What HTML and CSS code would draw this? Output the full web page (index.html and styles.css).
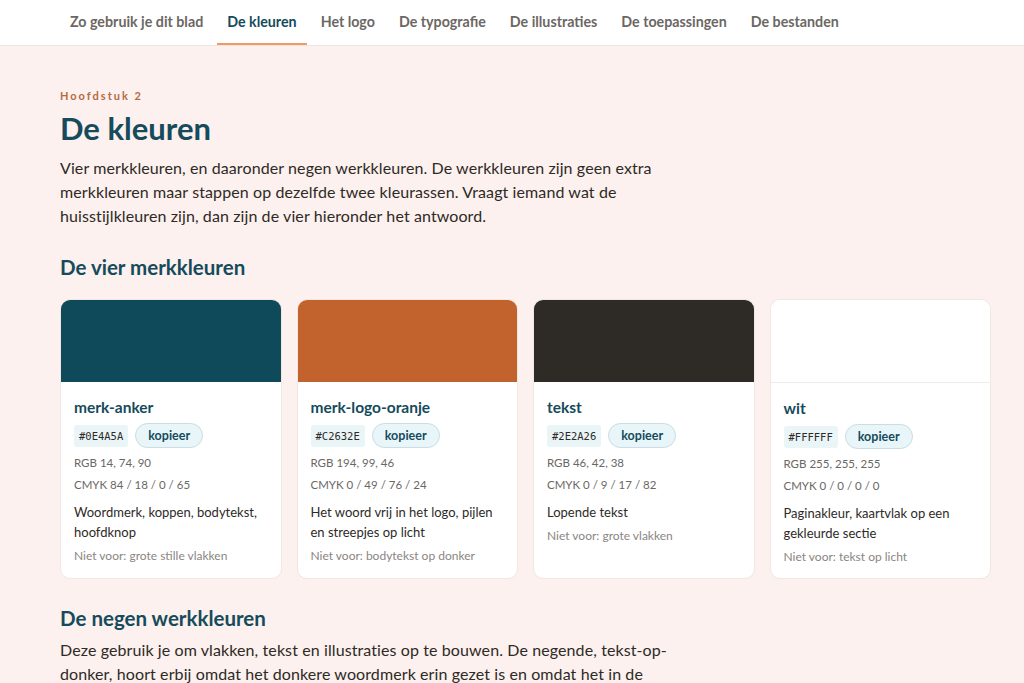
FILE: index.html
```html
<!DOCTYPE html>
<html lang="nl">
  <head>
    <meta charset="UTF-8" />
    <meta name="viewport" content="width=device-width, initial-scale=1.0" />
    <title>De kleuren</title>
    <link rel="stylesheet" href="styles.css">
  </head>
  <body>
    <nav class="topnav">
      <a href="#">Zo gebruik je dit blad</a>
      <a href="#" class="active">De kleuren</a>
      <a href="#">Het logo</a>
      <a href="#">De typografie</a>
      <a href="#">De illustraties</a>
      <a href="#">De toepassingen</a>
      <a href="#">De bestanden</a>
    </nav>

    <main class="page">
      <p class="eyebrow">Hoofdstuk 2</p>
      <h1>De kleuren</h1>
      <p class="lead">
        Vier merkkleuren, en daaronder negen werkkleuren. De werkkleuren zijn geen extra
        merkkleuren maar stappen op dezelfde twee kleurassen. Vraagt iemand wat de
        huisstijlkleuren zijn, dan zijn de vier hieronder het antwoord.
      </p>

      <h2>De vier merkkleuren</h2>
      <div class="swatches">
        <div class="card">
          <div class="chip-color anker"></div>
          <div class="card-body">
            <h3>merk-anker</h3>
            <div class="codes">
              <code>#0E4A5A</code>
              <button>kopieer</button>
            </div>
            <p class="meta">RGB 14, 74, 90</p>
            <p class="meta">CMYK 84 / 18 / 0 / 65</p>
            <p class="use">Woordmerk, koppen, bodytekst, hoofdknop</p>
            <p class="not">Niet voor: grote stille vlakken</p>
          </div>
        </div>
        <div class="card">
          <div class="chip-color oranje"></div>
          <div class="card-body">
            <h3>merk-logo-oranje</h3>
            <div class="codes">
              <code>#C2632E</code>
              <button>kopieer</button>
            </div>
            <p class="meta">RGB 194, 99, 46</p>
            <p class="meta">CMYK 0 / 49 / 76 / 24</p>
            <p class="use">Het woord vrij in het logo, pijlen en streepjes op licht</p>
            <p class="not">Niet voor: bodytekst op donker</p>
          </div>
        </div>
        <div class="card">
          <div class="chip-color tekst"></div>
          <div class="card-body">
            <h3>tekst</h3>
            <div class="codes">
              <code>#2E2A26</code>
              <button>kopieer</button>
            </div>
            <p class="meta">RGB 46, 42, 38</p>
            <p class="meta">CMYK 0 / 9 / 17 / 82</p>
            <p class="use">Lopende tekst</p>
            <p class="not">Niet voor: grote vlakken</p>
          </div>
        </div>
        <div class="card">
          <div class="chip-color wit"></div>
          <div class="card-body">
            <h3>wit</h3>
            <div class="codes">
              <code>#FFFFFF</code>
              <button>kopieer</button>
            </div>
            <p class="meta">RGB 255, 255, 255</p>
            <p class="meta">CMYK 0 / 0 / 0 / 0</p>
            <p class="use">Paginakleur, kaartvlak op een gekleurde sectie</p>
            <p class="not">Niet voor: tekst op licht</p>
          </div>
        </div>
      </div>

      <h2>De negen werkkleuren</h2>
      <p class="lead">
        Deze gebruik je om vlakken, tekst en illustraties op te bouwen. De negende, tekst-op-donker,
        hoort erbij omdat het donkere woordmerk erin gezet is en omdat het in de
        illustraties steeds terugkomt.
      </p>
    </main>
  </body>
</html>
```

FILE: styles.css
```css
body {
  margin: 0;
  font-family: Lato, "Noto Sans", sans-serif;
  background-color: #fcf1ee;
  color: #2e2a26;
}
.topnav {
  display: flex;
  gap: 4px;
  height: 46px;
  padding: 0 0 0 60px;
  background-color: white;
  border-bottom: 1px solid #eee4e0;
  box-sizing: border-box;
}
.topnav a {
  display: flex;
  align-items: center;
  padding: 0 10px;
  font-size: 14.25px;
  font-weight: 700;
  color: #6b6764;
  text-decoration: none;
  border-bottom: 2px solid transparent;
}
.topnav a.active {
  color: #154b5b;
  border-bottom-color: #f09a68;
}
.page {
  padding: 43px 33px 0 60px;
}
.eyebrow {
  margin: 0;
  font-size: 11px;
  font-weight: 700;
  letter-spacing: 2px;
  color: #b66a3f;
}
h1 {
  margin: 7px 0 9px;
  font-size: 31px;
  font-weight: 700;
  color: #154b5b;
}
h2 {
  margin: 27px 0 8px;
  font-size: 20.5px;
  font-weight: 700;
  color: #154b5b;
}
.lead {
  margin: 0;
  max-width: 612px;
  font-size: 16px;
  letter-spacing: 0.1px;
  line-height: 24px;
}
.swatches {
  display: grid;
  grid-template-columns: repeat(4, 1fr);
  gap: 15px;
  margin-top: 20px;
}
.card {
  background-color: white;
  border: 1px solid #f0e6e2;
  border-radius: 10px;
  overflow: hidden;
}
.chip-color {
  height: 82px;
}
.anker { background-color: #0e4a5a; }
.oranje { background-color: #c2632e; }
.tekst { background-color: #2e2a26; }
.wit { background-color: #ffffff; border-bottom: 1px solid #f0eae8; }
.card-body {
  padding: 16px 13px 12px;
}
.card-body h3 {
  margin: 0 0 7px;
  font-size: 15.5px;
  font-weight: 700;
  color: #154b5b;
}
.codes {
  display: flex;
  align-items: center;
  gap: 7px;
  margin-bottom: 4px;
}
.codes code {
  padding: 5px 5px;
  font-family: "DejaVu Sans Mono", monospace;
  font-size: 10.5px;
  background-color: #eaf5f8;
  border-radius: 3px;
  color: #2e2a26;
}
.codes button {
  padding: 4px 12px;
  font-family: inherit;
  font-size: 12.5px;
  font-weight: 700;
  color: #154b5b;
  background-color: #e8f6fa;
  border: 1px solid #c9dde3;
  border-radius: 999px;
  cursor: pointer;
}
.meta {
  margin: 0;
  font-size: 11.5px;
  line-height: 22px;
  color: #6b6764;
}
.use {
  margin: 6px 0 5px;
  font-size: 13px;
  line-height: 20px;
}
.not {
  margin: 0;
  font-size: 12px;
  line-height: 18px;
  color: #8a8582;
}
```
